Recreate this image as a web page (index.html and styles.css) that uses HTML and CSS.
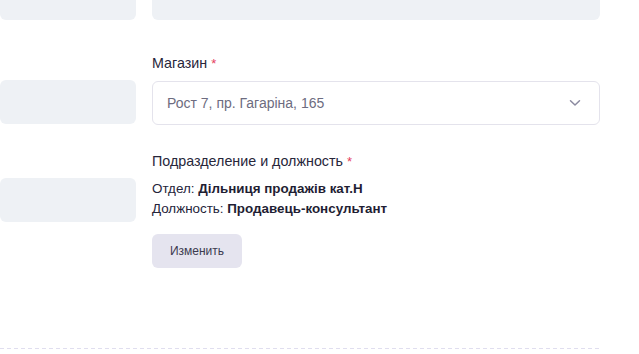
FILE: index.html
```html
<!DOCTYPE html>
<html>
<head>
  <meta charset="UTF-8">
  <title>Сотрудник</title>
  <link rel="stylesheet" href="styles.css">
</head>
<body>
  <div class="page">
    <form class="form-grid" onsubmit="return false">
      <!-- row 1 -->
      <div class="field first"><input class="input filled" type="text"></div>
      <div class="field first"><input class="input filled" type="text"></div>

      <!-- row 2 -->
      <div class="field">
        <label class="label hidden-label">&nbsp;</label>
        <input class="input filled" type="text">
      </div>
      <div class="field">
        <label class="label">Магазин <span class="req">*</span></label>
        <div class="select">
          <span class="select-value">Рост 7, пр. Гагаріна, 165</span>
          <svg class="chevron" width="12" height="8" viewBox="0 0 12 8">
            <path d="M1.5 1.8 L6 6 L10.5 1.8" fill="none" stroke="#8b8aa0" stroke-width="1.5" stroke-linecap="round" stroke-linejoin="round"/>
          </svg>
        </div>
      </div>

      <!-- row 3 -->
      <div class="field">
        <label class="label hidden-label">&nbsp;</label>
        <input class="input filled" type="text">
      </div>
      <div class="field">
        <label class="label">Подразделение и должность <span class="req">*</span></label>
        <div class="info">
          <div>Отдел: <b>Дільниця продажів кат.Н</b></div>
          <div>Должность: <b>Продавець-консультант</b></div>
        </div>
        <button class="btn" type="button">Изменить</button>
      </div>
    </form>
    <div class="divider"></div>
  </div>
</body>
</html>
```

FILE: styles.css
```css
body {
  margin: 0;
  background: #fff;
  font-family: "Liberation Sans", Arial, sans-serif;
  color: #25243a;
  overflow: hidden;
}

.page {
  width: 600px;
  margin-top: -24px;
}

.form-grid {
  display: grid;
  grid-template-columns: 136px 448px;
  column-gap: 16px;
  row-gap: 24px;
}

.field.first {
  margin-bottom: 7px;
}

.label {
  display: block;
  font-size: 14.3px;
  line-height: 20px;
  padding-top: 2px;
  margin-bottom: 7px;
  color: #27263a;
}

.req {
  color: #e5405e;
  font-size: 13px;
}

.input {
  display: block;
  width: 100%;
  height: 44px;
  box-sizing: border-box;
  border: none;
  border-radius: 6px;
  outline: none;
}

.input.filled {
  background: #eef1f5;
}

.select {
  display: flex;
  align-items: center;
  justify-content: space-between;
  height: 44px;
  box-sizing: border-box;
  border: 1px solid #e4e3ec;
  border-radius: 6px;
  padding: 0 18px 0 14px;
}

.select-value {
  font-size: 14px;
  color: #6d6c80;
}

.info {
  font-size: 13.4px;
  line-height: 20px;
  color: #25243a;
}

.info b {
  font-weight: 700;
  color: #1f1e33;
}

.btn {
  display: block;
  margin-top: 15px;
  width: 90px;
  height: 34px;
  border: none;
  border-radius: 6px;
  background: #e5e4ef;
  color: #3c3b50;
  font-family: inherit;
  font-size: 12px;
  cursor: pointer;
}

.divider {
  margin-top: 80px;
  height: 1px;
  background: repeating-linear-gradient(to right, #e0deef 0 4px, transparent 4px 7px);
}
```
